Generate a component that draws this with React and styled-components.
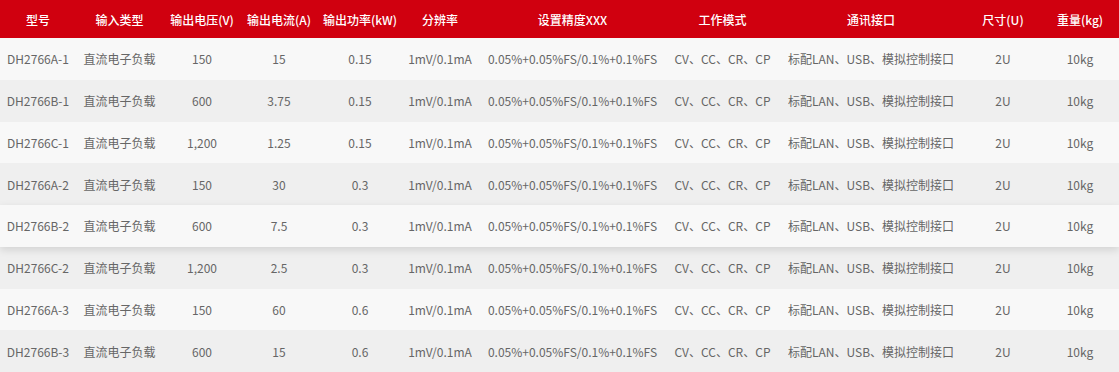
import styled, { createGlobalStyle } from "styled-components";

const GlobalStyle = createGlobalStyle`
  body {
    margin: 0;
    background: #ffffff;
    font-family: "Noto Sans CJK SC", "Noto Sans", sans-serif;
  }
`;

const columns = "76px 87px 78px 76px 86px 74px 191px 109px 188px 76px 78px";

const TableWrap = styled.div`
  width: 1119px;
  overflow: hidden;
`;

const HeadRow = styled.div`
  display: grid;
  grid-template-columns: ${columns};
  height: 38px;
  background: #d0000f;
  color: #ffffff;
  font-size: 12px;
  font-weight: 500;
`;

const Row = styled.div`
  display: grid;
  grid-template-columns: ${columns};
  height: 41.75px;
  background: ${(p) => (p.$even ? "#efefef" : "#f8f8f8")};
  color: #666666;
  font-size: 12px;
  position: relative;
  z-index: ${(p) => (p.$hover ? 1 : 0)};
  box-shadow: ${(p) => (p.$hover ? "0 3px 8px rgba(0, 0, 0, 0.12)" : "none")};
`;

const Cell = styled.div`
  display: flex;
  align-items: center;
  justify-content: center;
  white-space: nowrap;
`;

const headers = [
  "型号",
  "输入类型",
  "输出电压(V)",
  "输出电流(A)",
  "输出功率(kW)",
  "分辨率",
  "设置精度XXX",
  "工作模式",
  "通讯接口",
  "尺寸(U)",
  "重量(kg)",
];

const models = [
  ["DH2766A-1", "150", "15", "0.15"],
  ["DH2766B-1", "600", "3.75", "0.15"],
  ["DH2766C-1", "1,200", "1.25", "0.15"],
  ["DH2766A-2", "150", "30", "0.3"],
  ["DH2766B-2", "600", "7.5", "0.3"],
  ["DH2766C-2", "1,200", "2.5", "0.3"],
  ["DH2766A-3", "150", "60", "0.6"],
  ["DH2766B-3", "600", "15", "0.6"],
];

const App = () => {
  return (
    <>
      <GlobalStyle />
      <TableWrap>
        <HeadRow>
          {headers.map((h) => (
            <Cell key={h}>{h}</Cell>
          ))}
        </HeadRow>
        {models.map(([name, volt, amp, kw], i) => (
          <Row key={name} $even={i % 2 === 1} $hover={i === 4}>
            <Cell>{name}</Cell>
            <Cell>直流电子负载</Cell>
            <Cell>{volt}</Cell>
            <Cell>{amp}</Cell>
            <Cell>{kw}</Cell>
            <Cell>1mV/0.1mA</Cell>
            <Cell>0.05%+0.05%FS/0.1%+0.1%FS</Cell>
            <Cell>CV、CC、CR、CP</Cell>
            <Cell>标配LAN、USB、模拟控制接口</Cell>
            <Cell>2U</Cell>
            <Cell>10kg</Cell>
          </Row>
        ))}
      </TableWrap>
    </>
  );
};

export default App;
